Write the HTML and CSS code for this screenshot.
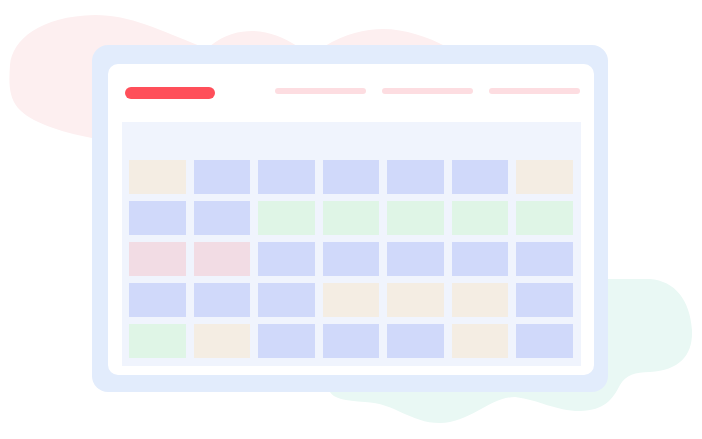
FILE: index.html
```html
<!DOCTYPE html>
<html lang="en">

<head>
    <meta charset="UTF-8">
    <meta name="viewport" content="width=device-width, initial-scale=1.0">
    <title>Calendar illustration</title>
    <link rel="stylesheet" href="styles.css">
</head>

<body>
    <div class="scene">
        <!--soft blobs behind the window-->
        <svg class="blobs" width="702" height="439" viewBox="0 0 702 439">
            <path class="blob-pink" d="M95 15 C130 15 160 30 200 46 L210 46 C225 34 240 31 252 31 C268 31 285 38 297 46 L325 46 C345 34 365 29 383 29 C405 29 428 37 445 46 L445 140 L92 140 L92 138 C60 132 30 122 18 108 C8 96 9 80 10 65 C12 40 40 16 95 15 Z" />
            <path class="blob-green" d="M600 279 L650 279 C675 281 690 300 692 330 C693 355 680 370 650 372 C635 372 626 375 620 385 C612 400 605 410 580 411 C555 411 540 400 515 397 C490 397 470 423 440 423 C410 423 395 403 365 402 C345 401 333 398 330 392 L330 380 L600 380 Z" />
        </svg>

        <div class="frame">
            <div class="window">
                <div class="topbar">
                    <span class="brand"></span>
                    <div class="links">
                        <span></span>
                        <span></span>
                        <span></span>
                    </div>
                </div>
                <div class="board">
                    <div class="cal">
                        <!--row 1-->
                        <i class="beige"></i><i class="blue"></i><i class="blue"></i><i class="blue"></i><i class="blue"></i><i class="blue"></i><i class="beige"></i>
                        <!--row 2-->
                        <i class="blue"></i><i class="blue"></i><i class="green"></i><i class="green"></i><i class="green"></i><i class="green"></i><i class="green"></i>
                        <!--row 3-->
                        <i class="pink"></i><i class="pink"></i><i class="blue"></i><i class="blue"></i><i class="blue"></i><i class="blue"></i><i class="blue"></i>
                        <!--row 4-->
                        <i class="blue"></i><i class="blue"></i><i class="blue"></i><i class="beige"></i><i class="beige"></i><i class="beige"></i><i class="blue"></i>
                        <!--row 5-->
                        <i class="green"></i><i class="beige"></i><i class="blue"></i><i class="blue"></i><i class="blue"></i><i class="beige"></i><i class="blue"></i>
                    </div>
                </div>
            </div>
        </div>
    </div>
</body>

</html>
```

FILE: styles.css
```css
html,
body {
    margin: 0;
    background-color: #fff;
}

.scene {
    position: relative;
    width: 702px;
    height: 439px;
    overflow: hidden;
}

.blobs {
    position: absolute;
    left: 0;
    top: 0;
}

.blob-pink {
    fill: #fdeff0;
}

.blob-green {
    fill: #e9f8f4;
}

.frame {
    position: relative;
    margin: 45px 0 0 92px;
    width: 516px;
    height: 347px;
    box-sizing: border-box;
    padding: 19px 14px 17px 16px;
    background-color: #e2ecfc;
    border-radius: 16px;
}

.window {
    height: 100%;
    box-sizing: border-box;
    padding: 23px 13px 9px 14px;
    background-color: #fff;
    border-radius: 10px;
}

.topbar {
    display: flex;
    align-items: flex-start;
    height: 12px;
    margin-bottom: 23px;
    padding-left: 3px;
}

.brand {
    width: 90px;
    height: 12px;
    background-color: #ff4f5a;
    border-radius: 6px;
}

.links {
    display: flex;
    gap: 15.5px;
    margin-left: auto;
    margin-top: 1px;
    margin-right: 1px;
}

.links span {
    width: 91.5px;
    height: 6px;
    background-color: #fddde1;
    border-radius: 3px;
}

.board {
    height: 244px;
    box-sizing: border-box;
    padding: 38px 8px 8px 7px;
    background-color: #f0f4fd;
}

.cal {
    display: grid;
    grid-template-columns: repeat(7, 1fr);
    grid-auto-rows: 34px;
    column-gap: 8px;
    row-gap: 7px;
}

.cal i {
    display: block;
}

.blue {
    background-color: #d0d9fa;
}

.beige {
    background-color: #f4ede3;
}

.green {
    background-color: #dff5e6;
}

.pink {
    background-color: #f2dce4;
}
```
